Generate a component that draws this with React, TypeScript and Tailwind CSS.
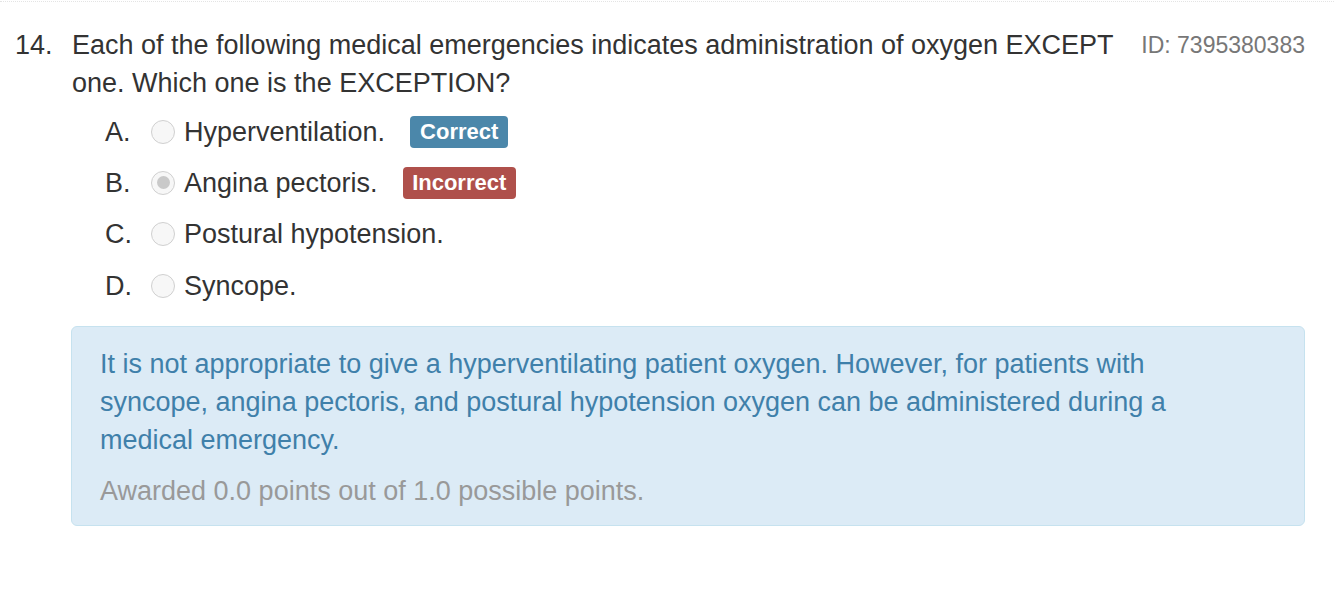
import React from "react";

const font = { fontFamily: '"Liberation Sans", Arial, Helvetica, sans-serif' };

function Radio({ checked }: { checked?: boolean }) {
  return (
    <div className="w-[24px] h-[24px] rounded-full border border-[#d0d0d0] bg-[#f7f7f7] flex items-center justify-center shrink-0">
      {checked && <div className="w-[13px] h-[13px] rounded-full bg-[#c9c9c9]" />}
    </div>
  );
}

function Option({
  letter,
  text,
  checked,
  badge,
}: {
  letter: string;
  text: string;
  checked?: boolean;
  badge?: "correct" | "incorrect";
}) {
  return (
    <div className="flex items-center h-[51.3px]">
      <div className="w-[46px] shrink-0 text-[27px] text-[#333]">{letter}</div>
      <Radio checked={checked} />
      <div className="ml-[9px] text-[27px] text-[#333]">{text}</div>
      {badge === "correct" && (
        <span className="ml-[25px] h-[32px] px-[10px] rounded-[4px] bg-[#4b87aa] text-white font-bold text-[22px] leading-[32px]">
          Correct
        </span>
      )}
      {badge === "incorrect" && (
        <span className="ml-[25px] h-[32px] px-[9.5px] rounded-[4px] bg-[#af504b] text-white font-bold text-[22px] leading-[32px]">
          Incorrect
        </span>
      )}
    </div>
  );
}

export default function App() {
  return (
    <div className="w-[1334px] h-[616px] bg-white overflow-hidden" style={font}>
      <div className="mt-[1px] border-t border-dotted border-[#e4e4e4]" />
      <div className="pl-[15px] pr-[29px] pt-[24px]">
        <div className="flex leading-[38px]">
          <div className="w-[57px] shrink-0 text-[27px] text-[#333]">14.</div>
          <div className="flex-1 flex">
            <div className="flex-1 pr-[20px] text-[27px] text-[#333]">
              Each of the following medical emergencies indicates administration of oxygen EXCEPT one. Which one is the EXCEPTION?
            </div>
            <div className="shrink-0 text-[23px] text-[#777] leading-[38px]">ID: 7395380383</div>
          </div>
        </div>
        <div className="ml-[57px]">
          <div className="pl-[33px] mt-[4px] leading-[38px]">
            <Option letter="A." text="Hyperventilation." badge="correct" />
            <Option letter="B." text="Angina pectoris." checked badge="incorrect" />
            <Option letter="C." text="Postural hypotension." />
            <Option letter="D." text="Syncope." />
          </div>
          <div className="mt-[15px] ml-[-1px] border border-[#c6e2ef] bg-[#dcebf6] rounded-[6px] pl-[28px] pt-[18px] pb-[15px]">
            <p className="text-[27px] leading-[38px] text-[#3f80aa] max-w-[1110px]">
              It is not appropriate to give a hyperventilating patient oxygen. However, for patients with syncope, angina pectoris, and postural hypotension oxygen can be administered during a medical emergency.
            </p>
            <p className="mt-[13px] text-[27px] leading-[38px] text-[#999]">
              Awarded 0.0 points out of 1.0 possible points.
            </p>
          </div>
        </div>
      </div>
    </div>
  );
}
